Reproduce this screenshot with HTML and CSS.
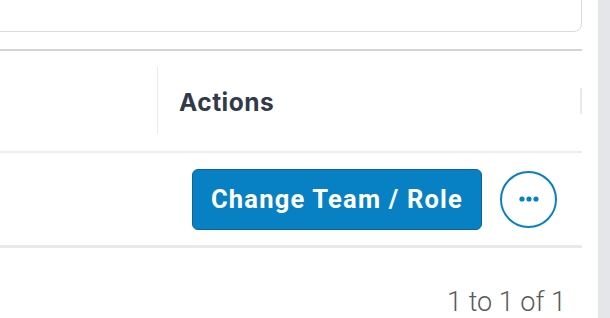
FILE: index.html
```html
<!DOCTYPE html>
<html lang="en">
  <head>
    <meta charset="UTF-8" />
    <meta name="viewport" content="width=device-width, initial-scale=1.0" />
    <link rel="stylesheet" href="styles.css">
  </head>
  <body>
    <div class="page">
      <div class="main">
        <div class="search-card"></div>

        <div class="grid">
          <div class="grid-header">
            <div class="col col-first"></div>
            <div class="col col-actions">
              <span class="header-label">Actions</span>
              <span class="resize-handle"></span>
            </div>
          </div>

          <div class="grid-row">
            <div class="col col-first"></div>
            <div class="col col-actions row-actions">
              <button class="btn-primary">Change Team / Role</button>
              <button class="btn-more" aria-label="More">
                <svg width="20" height="6" viewBox="0 0 20 6">
                  <circle cx="3" cy="3" r="2.6" fill="#0781c4" />
                  <circle cx="10" cy="3" r="2.6" fill="#0781c4" />
                  <circle cx="17" cy="3" r="2.6" fill="#0781c4" />
                </svg>
              </button>
            </div>
          </div>

          <div class="grid-paging">1 to 1 of 1</div>
        </div>
      </div>
      <div class="scroll-track"></div>
    </div>
  </body>
</html>
```

FILE: styles.css
```css
body {
  margin: 0;
  padding: 0;
  background-color: #fff;
  font-family: Inter, "Noto Sans", sans-serif;
  overflow: hidden;
}

.page {
  display: flex;
  height: 318px;
}

.main {
  width: 582px;
  flex-shrink: 0;
  overflow: hidden;
}

.scroll-track {
  margin-left: 16px;
  flex: 1;
  background-color: #e4e6ea;
}

.search-card {
  height: 50px;
  margin: -20px 0 0 -12px;
  border: 1.5px solid #d9dce2;
  border-radius: 8px;
}

.grid {
  margin-top: 17px;
  border-top: 2px solid #d0d5db;
}

.grid-header {
  display: flex;
  height: 100px;
  border-bottom: 2px solid #eceef2;
}

.col-first {
  width: 157px;
  flex-shrink: 0;
}

.col-actions {
  flex: 1;
  display: flex;
  align-items: center;
}

.grid-header .col-actions {
  margin: 16px 0 17px 0;
  border-left: 1.5px solid #e7eaef;
  padding-left: 21px;
}

.header-label {
  flex: 1;
  font-size: 24.5px;
  font-weight: 700;
  color: #323a4a;
  letter-spacing: 0.5px;
  padding-top: 2px;
}

.resize-handle {
  width: 2px;
  height: 26px;
  background-color: #e7eaf0;
}

.grid-row {
  display: flex;
  height: 92px;
  border-bottom: 3px solid #e7e9ed;
}

.row-actions {
  justify-content: flex-end;
  padding-right: 25px;
  gap: 18px;
}

.btn-primary {
  height: 61px;
  padding: 0 18px;
  background-color: #0781c4;
  color: #fff;
  border: 1px solid #0b6599;
  border-radius: 6px;
  font-family: Roboto, "Liberation Sans", sans-serif;
  font-size: 25.5px;
  font-weight: 700;
  letter-spacing: 1.2px;
  cursor: pointer;
}

.btn-more {
  width: 57px;
  height: 57px;
  padding: 0;
  border: 2px solid #0781c4;
  border-radius: 50%;
  background-color: #fff;
  display: flex;
  align-items: center;
  justify-content: center;
  cursor: pointer;
}

.grid-paging {
  text-align: right;
  padding: 38px 16px 0 0;
  font-family: Roboto, "Liberation Sans", sans-serif;
  font-weight: 300;
  font-size: 27px;
  color: #5a5a5a;
}
```
